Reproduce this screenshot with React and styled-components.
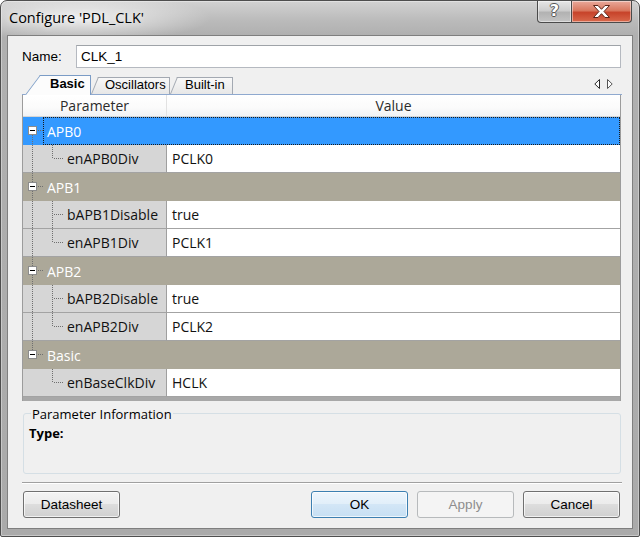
import React from 'react';
import styled, { createGlobalStyle } from 'styled-components';

const UI = `"Open Sans", "Noto Sans", "DejaVu Sans", sans-serif`;
const SANS = `"Liberation Sans", Arial, sans-serif`;

const GlobalStyle = createGlobalStyle`
  html, body { margin: 0; padding: 0; width: 640px; height: 537px; overflow: hidden; background: #ffffff; }
  #root { width: 640px; height: 537px; }
  *, *::before, *::after { box-sizing: border-box; }
`;

const Window = styled.div`
  width: 640px;
  height: 537px;
  display: flex;
  flex-direction: column;
  border: 1px solid #4e4e4e;
  border-radius: 7px 7px 2px 2px;
  padding: 0 6px 7px 6px;
  background:
    radial-gradient(ellipse 130px 24px at 80px 17px, rgba(255,255,255,0.75), rgba(255,255,255,0) 100%),
    linear-gradient(to bottom, #d2d2d2 0px, #bababa 20px, #b0b0b0 34px, #aaaaaa 100%);
  box-shadow: inset 0 0 0 1px rgba(255,255,255,0.35);
`;

const TitleBar = styled.div`
  height: 34px;
  flex: none;
  display: flex;
  align-items: flex-start;
  justify-content: space-between;
  padding-left: 2px;
`;

const TitleText = styled.div`
  align-self: center;
  margin-top: -1px;
  font: 14.5px ${UI};
  color: #000;
  text-shadow: 0 0 6px rgba(255,255,255,0.9);
`;

const CaptionButtons = styled.div`
  display: flex;
  margin-right: 1px;
`;

const CaptionButton = styled.div`
  width: ${p => p.$w}px;
  height: 22px;
  display: flex;
  align-items: center;
  justify-content: center;
  border: 1px solid #4a4a4a;
  border-top: none;
  border-radius: ${p => p.$r};
  box-shadow: inset 0 0 0 1px rgba(255,255,255,0.45);
  background: ${p => p.$close
    ? 'linear-gradient(to bottom, #e9a99b 0%, #d9785f 45%, #c7432a 55%, #d9694c 100%)'
    : 'linear-gradient(to bottom, #e6e6e6 0%, #cdcdcd 45%, #b2b2b2 55%, #c4c4c4 100%)'};
  & + & { margin-left: -1px; }
`;

const HelpGlyph = styled.span`
  font: bold 16px "DejaVu Sans", sans-serif;
  color: #fff;
  line-height: 1;
  margin-top: -1px;
  text-shadow: 1px 0 0 #555, -1px 0 0 #555, 0 1px 0 #555, 0 -1px 0 #555;
`;

const Client = styled.div`
  flex: 1;
  display: flex;
  flex-direction: column;
  background: #f0f0f0;
  border: 1px solid #7f7f7f;
  padding: 9px 10px 10px 14px;
`;

const NameRow = styled.div`
  display: flex;
  align-items: center;
  height: 23px;
`;

const NameLabel = styled.label`
  width: 54px;
  font: 13.5px ${SANS};
  color: #000;
`;

const NameInput = styled.div`
  width: 545px;
  height: 23px;
  display: flex;
  align-items: center;
  padding-left: 4px;
  background: #fff;
  border: 1px solid #b5b9c0;
  border-top-color: #9fa3a8;
  font: 13.5px ${SANS};
  color: #000;
`;

const TabHeader = styled.div`
  margin-top: 7px;
  height: 19px;
  display: flex;
  align-items: flex-end;
  padding-left: 3px;
  position: relative;
`;

const TabItem = styled.div`
  position: relative;
  isolation: isolate;
  z-index: ${p => (p.$active ? 2 : 1)};
  width: ${p => p.$w}px;
  height: ${p => (p.$active ? 20 : 17)}px;
  margin-bottom: ${p => (p.$active ? -1 : 0)}px;
  display: flex;
  align-items: center;
  padding-left: ${p => p.$pl}px;
  padding-bottom: ${p => (p.$active ? 3 : 2)}px;
  font: ${p => (p.$active ? 'bold' : 'normal')} 13px ${SANS};
  color: #000;
  white-space: nowrap;
  &::before {
    content: '';
    position: absolute;
    z-index: -1;
    left: 0;
    top: 0;
    bottom: 0;
    width: ${p => p.$s * 2}px;
    border-left: 1px solid ${p => (p.$active ? '#7b9cc6' : '#a3a9b2')};
    border-top: 1px solid ${p => (p.$active ? '#7b9cc6' : '#a3a9b2')};
    transform-origin: bottom left;
    transform: skewX(${p => p.$skew}deg);
    background: ${p => (p.$active ? '#fcfcfc' : 'linear-gradient(to bottom, #f8f8f8, #e7e7e7)')};
  }
  &::after {
    content: '';
    position: absolute;
    z-index: -1;
    left: ${p => p.$s * 2}px;
    right: 0;
    top: 0;
    bottom: 0;
    border-top: 1px solid ${p => (p.$active ? '#7b9cc6' : '#a3a9b2')};
    border-right: 1px solid ${p => (p.$active ? '#7b9cc6' : '#a3a9b2')};
    background: ${p => (p.$active ? '#fcfcfc' : 'linear-gradient(to bottom, #f8f8f8, #e7e7e7)')};
  }
`;

const TabScroll = styled.div`
  margin-left: auto;
  align-self: center;
  display: flex;
  gap: 7px;
  margin-right: 9px;
  margin-top: -1px;
`;

const Panel = styled.div`
  width: 600px;
  border-top: 1px solid #8fa9cf;
  display: flex;
  flex-direction: column;
`;

const Grid = styled.div`
  width: 599px;
  border-left: 1px solid #9c9c9c;
  border-right: 1px solid #9c9c9c;
  display: flex;
  flex-direction: column;
`;

const HeaderRow = styled.div`
  height: 22px;
  display: flex;
  background: linear-gradient(to bottom, #ffffff 0%, #fbfbfb 60%, #f1f2f4 100%);
  border-bottom: 1px solid #d5d5d5;
`;

const HeaderCell = styled.div`
  ${p => (p.$key ? 'width: 144px; border-right: 1px solid #e2e2e2;' : 'flex: 1;')}
  display: flex;
  align-items: center;
  justify-content: center;
  font: 14px ${UI};
  color: #2b2b2b;
`;

const GroupRow = styled.div`
  height: 28px;
  display: flex;
  background: ${p => (p.$selected ? '#3399ff' : '#aca899')};
`;

const GroupLabel = styled.div`
  flex: 1;
  display: flex;
  align-items: center;
  padding-left: 3px;
  border: 1px dotted ${p => (p.$selected ? '#1a1a1a' : 'transparent')};
  font: 14px ${UI};
  color: #ffffff;
`;

const PropRow = styled.div`
  height: 28px;
  display: flex;
`;

const KeyCell = styled.div`
  width: 144px;
  display: flex;
  align-items: center;
  background: #d6d6d6;
  border-right: 1px solid #9f9f9f;
  border-bottom: 1px solid #a3a3a3;
  font: 14px ${UI};
  color: #111;
  white-space: nowrap;
  overflow: hidden;
`;

const ValueCell = styled.div`
  flex: 1;
  display: flex;
  align-items: center;
  padding-left: 5px;
  background: #ffffff;
  border-bottom: 1px solid #a3a3a3;
  font: 14px ${UI};
  color: #111;
`;

const Splitter = styled.div`
  height: 4px;
  background: #a8a8a8;
`;

const InfoBox = styled.div`
  position: relative;
  margin: 12px 1px 0 1px;
  height: 61px;
  border: 1px solid #d5dfe5;
  border-radius: 3px;
  padding: 10px 0 0 5px;
`;

const InfoLegend = styled.div`
  position: absolute;
  top: -9px;
  left: 7px;
  padding: 0 1px;
  background: #f0f0f0;
  font: 13px ${UI};
  line-height: 18px;
  color: #000;
`;

const InfoType = styled.div`
  font: bold 13px ${UI};
  line-height: 18px;
  color: #000;
`;

const Separator = styled.div`
  margin-top: 8px;
  width: 600px;
  height: 2px;
  border-top: 1px solid #a0a0a0;
  border-bottom: 1px solid #ffffff;
`;

const ButtonBar = styled.div`
  margin-top: 7px;
  width: 600px;
  display: flex;
  gap: 9px;
  padding: 0 2px 0 1px;
`;

const Spacer = styled.div`
  flex: 1;
`;

const DlgButton = styled.div`
  width: 97px;
  height: 27px;
  display: flex;
  align-items: center;
  justify-content: center;
  border-radius: 3px;
  font: 13.5px ${SANS};
  border: 1px solid ${p => (p.$variant === 'default' ? '#3c7fb1' : p.$variant === 'disabled' ? '#b7babc' : '#707070')};
  color: ${p => (p.$variant === 'disabled' ? '#8d8d8d' : '#000')};
  box-shadow: inset 0 0 0 1px ${p => (p.$variant === 'disabled' ? 'rgba(255,255,255,0)' : 'rgba(255,255,255,0.7)')};
  background: ${p =>
    p.$variant === 'default'
      ? 'linear-gradient(to bottom, #edf5fc 0%, #e1eef9 50%, #d3e6f6 50%, #c6dff3 100%)'
      : p.$variant === 'disabled'
      ? '#f4f4f4'
      : 'linear-gradient(to bottom, #f3f3f3 0%, #ebebeb 50%, #dddddd 50%, #d0d0d0 100%)'};
`;

const DOT = '#6f6f6f';

function GroupGlyph({ hasPrev, hasNext }) {
  return (
    <svg width="20" height="28" viewBox="0 0 20 28" style={{ flex: 'none' }}>
      {hasPrev && <path d="M9.5 0V9" stroke={DOT} strokeDasharray="1 1" />}
      {hasNext && <path d="M9.5 18V28" stroke={DOT} strokeDasharray="1 1" />}
      <path d="M15 13.5H20" stroke={DOT} strokeDasharray="1 1" />
      <rect x="5.5" y="9.5" width="8" height="8" fill="#ffffff" stroke="#8c8c8c" />
      <path d="M7 13.5H12" stroke="#000000" />
    </svg>
  );
}

function ChildGlyph({ outer, last }) {
  return (
    <svg width="44" height="27" viewBox="0 0 44 27" style={{ flex: 'none' }}>
      {outer && <path d="M9.5 0V27" stroke={DOT} strokeDasharray="1 1" />}
      <path d={last ? 'M29.5 0V14' : 'M29.5 0V27'} stroke={DOT} strokeDasharray="1 1" />
      <path d="M31 13.5H40" stroke={DOT} strokeDasharray="1 1" />
    </svg>
  );
}

function CloseGlyph() {
  return (
    <svg width="17" height="13" viewBox="0 0 17 13">
      <path
        d="M0.5 0.5H5L8.5 4.3L12 0.5H16.5L11 6.5L16.5 12.5H12L8.5 8.7L5 12.5H0.5L6 6.5Z"
        fill="#ffffff"
        stroke="#5a2418"
        strokeWidth="1"
        strokeLinejoin="round"
      />
    </svg>
  );
}

function ScrollArrows() {
  return (
    <TabScroll>
      <svg width="6" height="10" viewBox="0 0 6 10">
        <path d="M5.5 0.5L0.8 5L5.5 9.5Z" fill="#ffffff" stroke="#2a2a2a" />
      </svg>
      <svg width="6" height="10" viewBox="0 0 6 10">
        <path d="M0.5 0.5L5.2 5L0.5 9.5Z" fill="#ffffff" stroke="#555555" />
      </svg>
    </TabScroll>
  );
}

const tabs = [
  { label: 'Basic', active: true, w: 66, pl: 25, s: 15 },
  { label: 'Oscillators', w: 79, pl: 14, s: 7 },
  { label: 'Built-in', w: 63, pl: 15, s: 7 },
];

const groups = [
  { name: 'APB0', selected: true, items: [['enAPB0Div', 'PCLK0']] },
  { name: 'APB1', items: [['bAPB1Disable', 'true'], ['enAPB1Div', 'PCLK1']] },
  { name: 'APB2', items: [['bAPB2Disable', 'true'], ['enAPB2Div', 'PCLK2']] },
  { name: 'Basic', items: [['enBaseClkDiv', 'HCLK']] },
];

export default function App() {
  return (
    <>
      <GlobalStyle />
      <Window>
        <TitleBar>
          <TitleText>Configure 'PDL_CLK'</TitleText>
          <CaptionButtons>
            <CaptionButton $w={35} $r="0 0 0 4px">
              <HelpGlyph>?</HelpGlyph>
            </CaptionButton>
            <CaptionButton $w={61} $r="0 0 4px 0" $close>
              <CloseGlyph />
            </CaptionButton>
          </CaptionButtons>
        </TitleBar>
        <Client>
          <NameRow>
            <NameLabel>Name:</NameLabel>
            <NameInput>CLK_1</NameInput>
          </NameRow>
          <TabHeader>
            {tabs.map(t => {
              const h = t.active ? 20 : 17;
              const skew = -(Math.atan(t.s / h) * 180) / Math.PI;
              return (
                <TabItem key={t.label} $active={t.active} $w={t.w} $pl={t.pl} $s={t.s} $skew={skew}>
                  {t.label}
                </TabItem>
              );
            })}
            <ScrollArrows />
          </TabHeader>
          <Panel>
            <Grid>
              <HeaderRow>
                <HeaderCell $key>Parameter</HeaderCell>
                <HeaderCell>Value</HeaderCell>
              </HeaderRow>
              {groups.map((g, gi) => {
                const hasNext = gi < groups.length - 1;
                return (
                  <React.Fragment key={g.name}>
                    <GroupRow $selected={g.selected}>
                      <GroupGlyph hasPrev={gi > 0} hasNext={hasNext} />
                      <GroupLabel $selected={g.selected}>{g.name}</GroupLabel>
                    </GroupRow>
                    {g.items.map(([k, v], ii) => (
                      <PropRow key={k}>
                        <KeyCell>
                          <ChildGlyph outer={hasNext} last={ii === g.items.length - 1} />
                          {k}
                        </KeyCell>
                        <ValueCell>{v}</ValueCell>
                      </PropRow>
                    ))}
                  </React.Fragment>
                );
              })}
              <Splitter />
            </Grid>
          </Panel>
          <InfoBox>
            <InfoLegend>Parameter Information</InfoLegend>
            <InfoType>Type:</InfoType>
          </InfoBox>
          <Separator />
          <ButtonBar>
            <DlgButton>Datasheet</DlgButton>
            <Spacer />
            <DlgButton $variant="default">OK</DlgButton>
            <DlgButton $variant="disabled">Apply</DlgButton>
            <DlgButton>Cancel</DlgButton>
          </ButtonBar>
        </Client>
      </Window>
    </>
  );
}
